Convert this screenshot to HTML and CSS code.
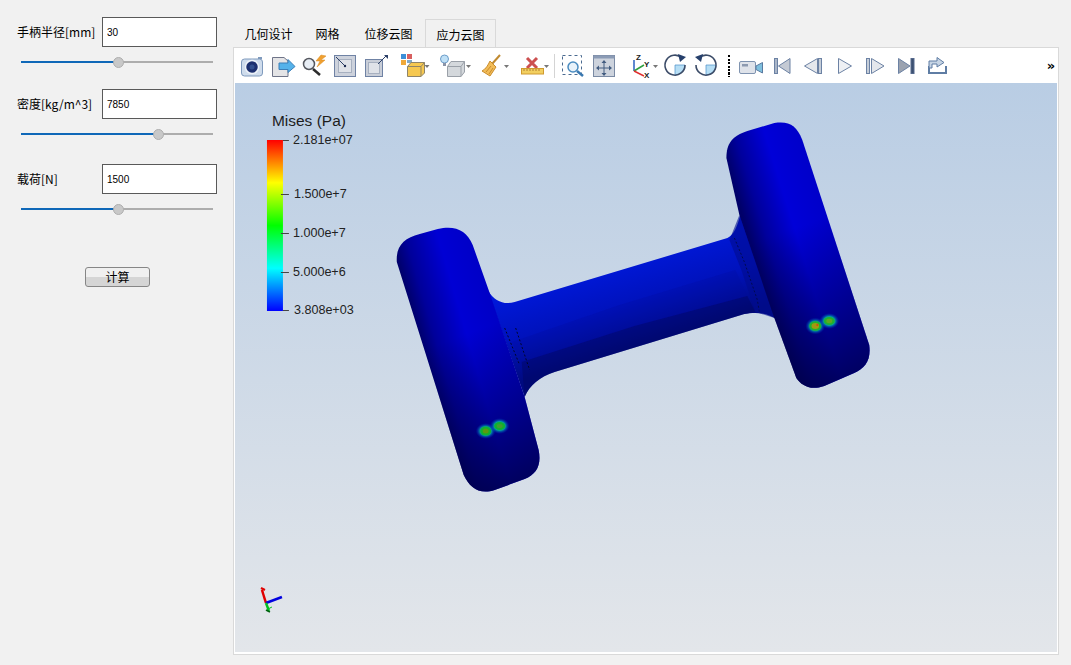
FILE: index.html
```html
<!DOCTYPE html>
<html lang="zh">
<head>
<meta charset="utf-8">
<title>手柄</title>
<link rel="stylesheet" href="styles.css">
</head>
<body>
<div class="app">
  <aside class="panel">
    <div class="group group-a">
      <div class="row"><label class="label">手柄半径[mm]</label><input class="field" value="30"></div>
      <div class="slider"><div class="fill" style="width:50.8%"></div><div class="thumb" style="left:50.8%"></div></div>
    </div>
    <div class="group group-b">
      <div class="row"><label class="label">密度[kg/m^3]</label><input class="field" value="7850"></div>
      <div class="slider"><div class="fill" style="width:71.6%"></div><div class="thumb" style="left:71.6%"></div></div>
    </div>
    <div class="group group-c">
      <div class="row"><label class="label">载荷[N]</label><input class="field" value="1500"></div>
      <div class="slider"><div class="fill" style="width:50.8%"></div><div class="thumb" style="left:50.8%"></div></div>
    </div>
    <button class="calc">计算</button>
  </aside>
  <main class="main">
    <nav class="tabs">
      <span class="tab">几何设计</span>
      <span class="tab">网格</span>
      <span class="tab tab-wide">位移云图</span>
      <span class="tab active">应力云图</span>
    </nav>
    <section class="pane">
      <div class="toolbar">
        <!-- every icon is drawn in page coordinates through its viewBox -->
        <svg width="31" height="35" viewBox="237 48 31 35"><rect x="241.5" y="59" width="21" height="17" rx="3" fill="#cfdcec" stroke="#7f9abd"/><rect x="258" y="57" width="4" height="2" fill="#7f9abd"/><circle cx="252" cy="67" r="6.5" fill="#1d3070" stroke="#eef3f9" stroke-width="1.5"/><circle cx="252" cy="67" r="2.5" fill="#33508f"/></svg>
        <svg width="31" height="35" viewBox="268 48 31 35"><path d="M272.5 57.5H284L288 61V76.5H272.5Z" fill="#e4e4e6" stroke="#6f7488"/><path d="M279 63H288V59.5L295 66.5L288 72.5V69.5H279Z" fill="#55b2ea" stroke="#3c7fb8"/></svg>
        <svg width="31" height="35" viewBox="299 48 31 35"><circle cx="309" cy="64" r="5.5" fill="#e8eef5" stroke="#55585f" stroke-width="1.5"/><path d="M313 69L320 75" stroke="#2c2c2c" stroke-width="2.5"/><path d="M321 55L316 61H320L317 67L325 60H321L326 56Z" fill="#f0a030" stroke="#d98a20" stroke-width=".5"/></svg>
        <svg width="31" height="35" viewBox="330 48 31 35"><rect x="334.5" y="55.5" width="21" height="21" fill="#cdd2dc" stroke="#6f82a4"/><rect x="338.5" y="59.5" width="13" height="13" fill="#dfe2e8" stroke="#a7b0c0"/><path d="M336 57L345 66" stroke="#2c4068"/><circle cx="345" cy="66" r="1.2" fill="#1c2c50"/></svg>
        <svg width="31" height="35" viewBox="361 48 31 35"><rect x="365.5" y="59.5" width="17" height="17" fill="#c9ced8" stroke="#6f82a4"/><rect x="368.5" y="62.5" width="11" height="11" fill="#dfe2e8" stroke="#a7b0c0"/><path d="M378 64L386 56" stroke="#2c4068"/><path d="M384 55H388V59Z" fill="#2c4068"/></svg>
        <svg width="40" height="35" viewBox="392 48 40 35"><rect x="401" y="54" width="5" height="5" fill="#3b8fd8"/><rect x="407" y="54" width="5" height="5" fill="#d86060"/><rect x="401" y="60" width="5" height="5" fill="#f0a838"/><rect x="407" y="60" width="5" height="3" fill="#80a8c8"/><path d="M407.5 66.5L411 62.5H424.5V73L421 76.5H407.5Z" fill="#f6c850" stroke="#8f8468"/><path d="M407.5 66.5H421V76.5M421 66.5L424.5 62.5" fill="none" stroke="#8f8468"/><path d="M424.5 65H429.5L427 68Z" fill="#777"/></svg>
        <svg width="42" height="35" viewBox="432 48 42 35"><circle cx="444.5" cy="59" r="4" fill="#bfe0f6" stroke="#6c9cc8"/><rect x="443" y="63" width="3" height="3" fill="#8a94a8"/><path d="M447.5 66.5L451 61.5H464.5V72L461 76.5H447.5Z" fill="#d4d8dc" stroke="#9aa0a8"/><path d="M447.5 66.5H461V76.5M461 66.5L464.5 61.5" fill="none" stroke="#9aa0a8"/><path d="M466 65H471L468.5 68Z" fill="#777"/></svg>
        <svg width="39" height="35" viewBox="474 48 39 35"><path d="M500 55L492 64" stroke="#c08a30" stroke-width="2"/><path d="M490 61L496 67L490 76L482 71C486 69 488 65 490 61Z" fill="#f2bc58" stroke="#c98c2c"/><path d="M486 72L491 66M489 74L493 68" stroke="#c98c2c" fill="none"/><path d="M504 65H509L506.5 68Z" fill="#777"/></svg>
        <svg width="40" height="35" viewBox="513 48 40 35"><path d="M527 58L537 68M537 58L527 68" stroke="#cc5050" stroke-width="3"/><rect x="521.5" y="68.5" width="22" height="5.5" fill="#f2cf60" stroke="#d09a30"/><path d="M524 69V71M527 69V71M530 69V71M533 69V71M536 69V71M539 69V71" stroke="#b08030"/><path d="M544 65H549L546.5 68Z" fill="#777"/></svg>
        <span class="sep"></span>
        <svg width="32" height="35" viewBox="556 48 32 35"><rect x="562.5" y="55.5" width="19" height="19" fill="none" stroke="#4a6a90" stroke-dasharray="3 3"/><circle cx="573" cy="67" r="5" fill="#e8f2fa" stroke="#4b8cc0" stroke-width="1.5"/><path d="M577 71L583 76" stroke="#3a78b0" stroke-width="2.5"/></svg>
        <svg width="31" height="35" viewBox="588 48 31 35"><rect x="593.5" y="55.5" width="21" height="21" fill="#cdd3dd" stroke="#7a8aa4"/><rect x="593.5" y="55.5" width="21" height="3" fill="#8b9bb5"/><path d="M604 61V75M597 68H611" stroke="#425c80"/><path d="M604 60L601.5 63H606.5ZM604 76L601.5 73H606.5ZM596 68L599 65.5V70.5ZM612 68L609 65.5V70.5Z" fill="#425c80"/></svg>
        <svg class="gap-left" width="38" height="35" viewBox="622 48 38 35"><path d="M634 71V60" stroke="#2a60c0" stroke-width="1.5"/><path d="M634 71L644 65" stroke="#30a040" stroke-width="1.5"/><path d="M634 71L644 76" stroke="#e03030" stroke-width="1.5"/><text class="axis-mark" x="636" y="60">Z</text><text class="axis-mark" x="644" y="67">Y</text><text class="axis-mark" x="644" y="78">X</text><path d="M653 65H658L655.5 68Z" fill="#777"/></svg>
        <svg width="31" height="35" viewBox="660 48 31 35"><path d="M675 65H685A10 10 0 0 1 675 75Z" fill="#b6def5" stroke="#4a90c8" stroke-width=".7"/><path d="M682 58A10 10 0 1 0 685 65" fill="none" stroke="#3c4c68" stroke-width="1.6"/><path d="M678 54L686 57L680 62Z" fill="#27406c"/></svg>
        <svg width="31" height="35" viewBox="691 48 31 35"><path d="M706 65H716A10 10 0 0 1 706 75Z" fill="#b6def5" stroke="#4a90c8" stroke-width=".7"/><path d="M699 58A10 10 0 1 1 696 65" fill="none" stroke="#3c4c68" stroke-width="1.6"/><path d="M703 54L695 57L701 62Z" fill="#27406c"/></svg>
        <span class="dots"></span>
        <svg width="31" height="35" viewBox="736 48 31 35"><rect x="739.5" y="61.5" width="16" height="12" rx="1.5" fill="#dfe3ea" stroke="#7f93b0"/><rect x="742" y="64" width="6" height="2.5" fill="#8d9ab0"/><path d="M756 66L762.5 62.5V73L756 69.5Z" fill="#7fc0de" stroke="#5a7aa0"/></svg>
        <svg width="31" height="35" viewBox="767 48 31 35"><rect x="774.5" y="58.5" width="3" height="15" fill="#aab6c8" stroke="#6c82a4"/><path d="M790 58.5V73.5L778.5 66Z" fill="#c4cad4" stroke="#6c82a4"/></svg>
        <svg width="31" height="35" viewBox="798 48 31 35"><path d="M817.5 58.5V73.5L804.5 66Z" fill="#e4e7ec" stroke="#6c82a4"/><rect x="818.5" y="58.5" width="3" height="15" fill="#c5cdd8" stroke="#6c82a4"/></svg>
        <svg width="31" height="35" viewBox="829 48 31 35"><path d="M838.5 58.5V73.5L851.5 66Z" fill="#eef0f4" stroke="#6c82a4"/></svg>
        <svg width="31" height="35" viewBox="860 48 31 35"><rect x="866.5" y="58.5" width="3" height="15" fill="#c5cdd8" stroke="#6c82a4"/><path d="M871.5 58.5V73.5L884 66Z" fill="#e4e7ec" stroke="#6c82a4"/></svg>
        <svg width="31" height="35" viewBox="891 48 31 35"><path d="M898.5 58.5V73.5L910 66Z" fill="#9aa2b0" stroke="#6c82a4"/><rect x="911" y="58.5" width="3" height="15" fill="#3c5070" stroke="#54688c"/></svg>
        <svg width="31" height="35" viewBox="922 48 31 35"><path d="M929 66V73H946V66" fill="none" stroke="#5f7da4" stroke-width="2"/><path d="M929 68V61H937V57.5L944 62.5L937 67V64H932V68Z" fill="#c6d4e4" stroke="#5f7da4"/></svg>
        <span class="more">»</span>
      </div>
      <div class="view">
        <svg class="scene" viewBox="235 83 823 569" preserveAspectRatio="none">
          <defs>
            <linearGradient id="lut" x1="0" y1="0" x2="0" y2="1">
              <stop offset="0" stop-color="#ff0000"/>
              <stop offset=".25" stop-color="#ffff00"/>
              <stop offset=".5" stop-color="#00ff00"/>
              <stop offset=".75" stop-color="#00ffff"/>
              <stop offset="1" stop-color="#0000ff"/>
            </linearGradient>
            <linearGradient id="discL" gradientUnits="userSpaceOnUse" x1="408" y1="300" x2="490" y2="276">
              <stop offset="0" stop-color="#000068"/>
              <stop offset=".18" stop-color="#00009a"/>
              <stop offset=".55" stop-color="#0000d4"/>
              <stop offset="1" stop-color="#0000c4"/>
            </linearGradient>
            <linearGradient id="shadeL" gradientUnits="userSpaceOnUse" x1="450" y1="340" x2="505" y2="490">
              <stop offset="0" stop-color="#000040" stop-opacity="0"/>
              <stop offset="1" stop-color="#000040" stop-opacity=".8"/>
            </linearGradient>
            <linearGradient id="discR" gradientUnits="userSpaceOnUse" x1="735" y1="190" x2="815" y2="165">
              <stop offset="0" stop-color="#000068"/>
              <stop offset=".2" stop-color="#00009c"/>
              <stop offset=".55" stop-color="#0000d8"/>
              <stop offset="1" stop-color="#0000c8"/>
            </linearGradient>
            <linearGradient id="shadeR" gradientUnits="userSpaceOnUse" x1="790" y1="230" x2="845" y2="385">
              <stop offset="0" stop-color="#000040" stop-opacity="0"/>
              <stop offset="1" stop-color="#000040" stop-opacity=".8"/>
            </linearGradient>
            <linearGradient id="neck" gradientUnits="userSpaceOnUse" x1="615" y1="265" x2="640" y2="345">
              <stop offset="0" stop-color="#0018d8"/>
              <stop offset=".5" stop-color="#0012bc"/>
              <stop offset="1" stop-color="#000a80"/>
            </linearGradient>
            <radialGradient id="halo">
              <stop offset="0" stop-color="#18c070"/>
              <stop offset=".55" stop-color="#00a0a0"/>
              <stop offset="1" stop-color="#0020c0" stop-opacity="0"/>
            </radialGradient>
          </defs>

          <path d="M488 290C495 302 505 305 515 302L728 238C735 235 738 225 741 215L778 320C768 312 755 312 745 314L555 372C540 377 530 385 525 397Z" fill="url(#neck)"/>
          <path d="M512 342L620 305L736 270L748 296L635 326L522 362Z" fill="#000c9c" opacity=".25"/>
          <path d="M522 362L635 326L748 296L756 312L745 314L555 372C540 377 530 385 525 397Z" fill="#00065a" opacity=".4"/>
          <path d="M730 240L742 270L756 312L775 318L740 215Z" fill="#000b90" opacity=".6"/>
          <path d="M735 238L745 262L758 300L760 312" fill="none" stroke="#000a50" stroke-dasharray="2 2"/>
          <path d="M505 328L520 365M516 328L530 370" fill="none" stroke="#00062a" stroke-dasharray="2 2"/>

          <path id="left-disc" d="M397 262C396 246 404 238 420 234L438 229C455 225 467 230 473 245L490 293L525 397L539 450C542 465 537 474 525 479L495 490C480 495 470 488 464 475Z" fill="url(#discL)"/>
          <path d="M397 262C396 246 404 238 420 234L438 229C455 225 467 230 473 245L490 293L525 397L539 450C542 465 537 474 525 479L495 490C480 495 470 488 464 475Z" fill="url(#shadeL)"/>

          <path id="right-disc" d="M727 158C727 143 733 136 748 131L775 123C790 121 797 125 803 140L870 345C872 360 866 368 855 373L825 386C810 391 802 385 797 378L775 318L740 215Z" fill="url(#discR)"/>
          <path d="M727 158C727 143 733 136 748 131L775 123C790 121 797 125 803 140L870 345C872 360 866 368 855 373L825 386C810 391 802 385 797 378L775 318L740 215Z" fill="url(#shadeR)"/>

          <g class="hot">
            <ellipse cx="486" cy="431" rx="10" ry="8" fill="url(#halo)"/>
            <ellipse cx="500" cy="426" rx="10" ry="8" fill="url(#halo)"/>
            <ellipse cx="486" cy="431" rx="5.5" ry="4.5" fill="#10b030"/>
            <ellipse cx="500" cy="426" rx="5.5" ry="4" fill="#10b030"/>
            <ellipse cx="486" cy="431" rx="3" ry="2.5" fill="#5a9a10"/>
            <ellipse cx="500" cy="426" rx="3" ry="2" fill="#3f9f30"/>
            <ellipse cx="816" cy="326" rx="10" ry="8.5" fill="url(#halo)"/>
            <ellipse cx="830" cy="321" rx="10" ry="8" fill="url(#halo)"/>
            <ellipse cx="816" cy="326" rx="6" ry="4.8" fill="#20b030"/>
            <ellipse cx="830" cy="321" rx="5.5" ry="4" fill="#20b030"/>
            <ellipse cx="816" cy="326" rx="3.8" ry="3" fill="#a09a10"/>
            <circle cx="818" cy="325" r="1" fill="#e04010"/>
            <ellipse cx="830" cy="321" rx="3" ry="2.2" fill="#60a820"/>
          </g>

          <text class="legend-title" x="272" y="126.5">Mises (Pa)</text>
          <rect x="267" y="140" width="16" height="171" fill="url(#lut)"/>
          <path d="M283 140.5H289M281 194.5H289M281 233.5H289M281 272.5H289M283 310.5H289" stroke="#444"/>
          <text class="legend-tick" x="293" y="144">2.181e+07</text>
          <text class="legend-tick" x="294" y="198">1.500e+7</text>
          <text class="legend-tick" x="293" y="237">1.000e+7</text>
          <text class="legend-tick" x="293" y="276">5.000e+6</text>
          <text class="legend-tick" x="294" y="314">3.808e+03</text>

          <g fill="none" stroke-width="2.5">
            <path d="M266 603L262 590" stroke="#e00000"/>
            <path d="M261 588L265 590" stroke="#e00000" stroke-width="2"/>
            <path d="M266 603L282 597" stroke="#0000e0"/>
            <path d="M266 603L269 611" stroke="#00c020"/>
            <path d="M268 609L272 607" stroke="#00c020" stroke-width="1"/>
            <path d="M266 610L270 612" stroke="#006010" stroke-width="1.5"/>
          </g>
        </svg>
      </div>
    </section>
  </main>
</div>
</body>
</html>
```
FILE: styles.css
```css
* { box-sizing: border-box; }
html, body { margin: 0; height: 100%; }
body {
  background: #f1f1f1;
  font-family: "Noto Sans CJK SC", "Liberation Sans", sans-serif;
  font-size: 12px;
  color: #000;
  overflow: hidden;
}
.app { display: flex; height: 665px; }

/* left controls */
.panel { width: 233px; flex: none; padding: 17px 0 0 17px; }
.group-a { margin-bottom: 26px; }
.group-b { margin-bottom: 29px; }
.group-c { margin-bottom: 57px; }
.row { display: flex; align-items: center; height: 30px; }
.label { width: 85px; flex: none; white-space: nowrap; position: relative; top: -1px; }
.field {
  width: 115px; height: 30px;
  border: 1px solid #595959;
  background: #fff;
  padding: 0 4px;
  font: 10px "Liberation Sans", sans-serif;
  color: #000;
  outline: none;
}
.slider {
  position: relative;
  width: 192px; height: 2px;
  margin: 14px 0 0 4px;
  background: #adadad;
}
.fill { height: 2px; background: #0f68b8; }
.thumb {
  position: absolute; top: -4.5px;
  width: 11px; height: 11px;
  margin-left: -5.5px;
  border-radius: 50%;
  background: #c8c8c8;
  border: 1px solid #aeaeae;
}
.calc {
  display: block;
  width: 65px; height: 20px;
  margin-left: 68px;
  padding: 0;
  border: 1px solid #868686;
  border-radius: 3px;
  background: linear-gradient(#f0f0f0 0 50%, #d5d5d5 50% 100%);
  font: 12px "Noto Sans CJK SC", sans-serif;
  line-height: 16px;
  color: #000;
}

/* tabs and pane */
.main { flex: none; width: 826px; padding-top: 19px; padding-bottom: 10px; display: flex; flex-direction: column; }
.tabs { display: flex; height: 28px; }
.tab {
  display: flex; align-items: center; justify-content: center;
  height: 28px; padding: 1px 11.5px 0;
  font-size: 12px;
  white-space: nowrap;
}
.tab-wide { margin-left: 2px; }
.tab.active {
  background: #f1f1f1;
  border: 1px solid #d9d9d9;
  border-bottom: none;
  margin-left: 1px;
  padding: 1px 0 0;
  width: 71px;
}
.pane {
  flex: 1; min-height: 0;
  display: flex; flex-direction: column;
  background: #fff;
  border: 1px solid #d9d9d9;
  padding: 0 1px 2px 1px;
}
.toolbar { display: flex; align-items: flex-start; height: 35px; flex: none; padding-left: 2px; }
.toolbar svg { display: block; flex: none; }
.gap-left { margin-left: 3px; }
.sep { width: 3px; height: 35px; flex: none; }
.sep::before {
  content: ""; display: block; width: 1px; height: 24px;
  margin: 6px 0 0 1px; background: #d4d4d4;
}
.dots {
  width: 2px; height: 22px; flex: none;
  margin: 7px 6px 0;
  background: repeating-linear-gradient(#000 0 2px, transparent 2px 3.5px);
}
.more {
  margin-left: auto; margin-right: 0;
  font: bold 13px/35px "DejaVu Sans", sans-serif;
  width: 12px; text-align: center;
}
.view {
  flex: 1; min-height: 0;
  background: linear-gradient(#b9cde4, #e3e6ea);
}
.scene { display: block; width: 100%; height: 100%; }
.axis-mark { font: bold 8px "Liberation Sans", sans-serif; fill: #222; }
.legend-title { font: 15.5px "Liberation Sans", sans-serif; fill: #1d1d1d; }
.legend-tick { font: 12.6px "Liberation Sans", sans-serif; fill: #222; }
```
